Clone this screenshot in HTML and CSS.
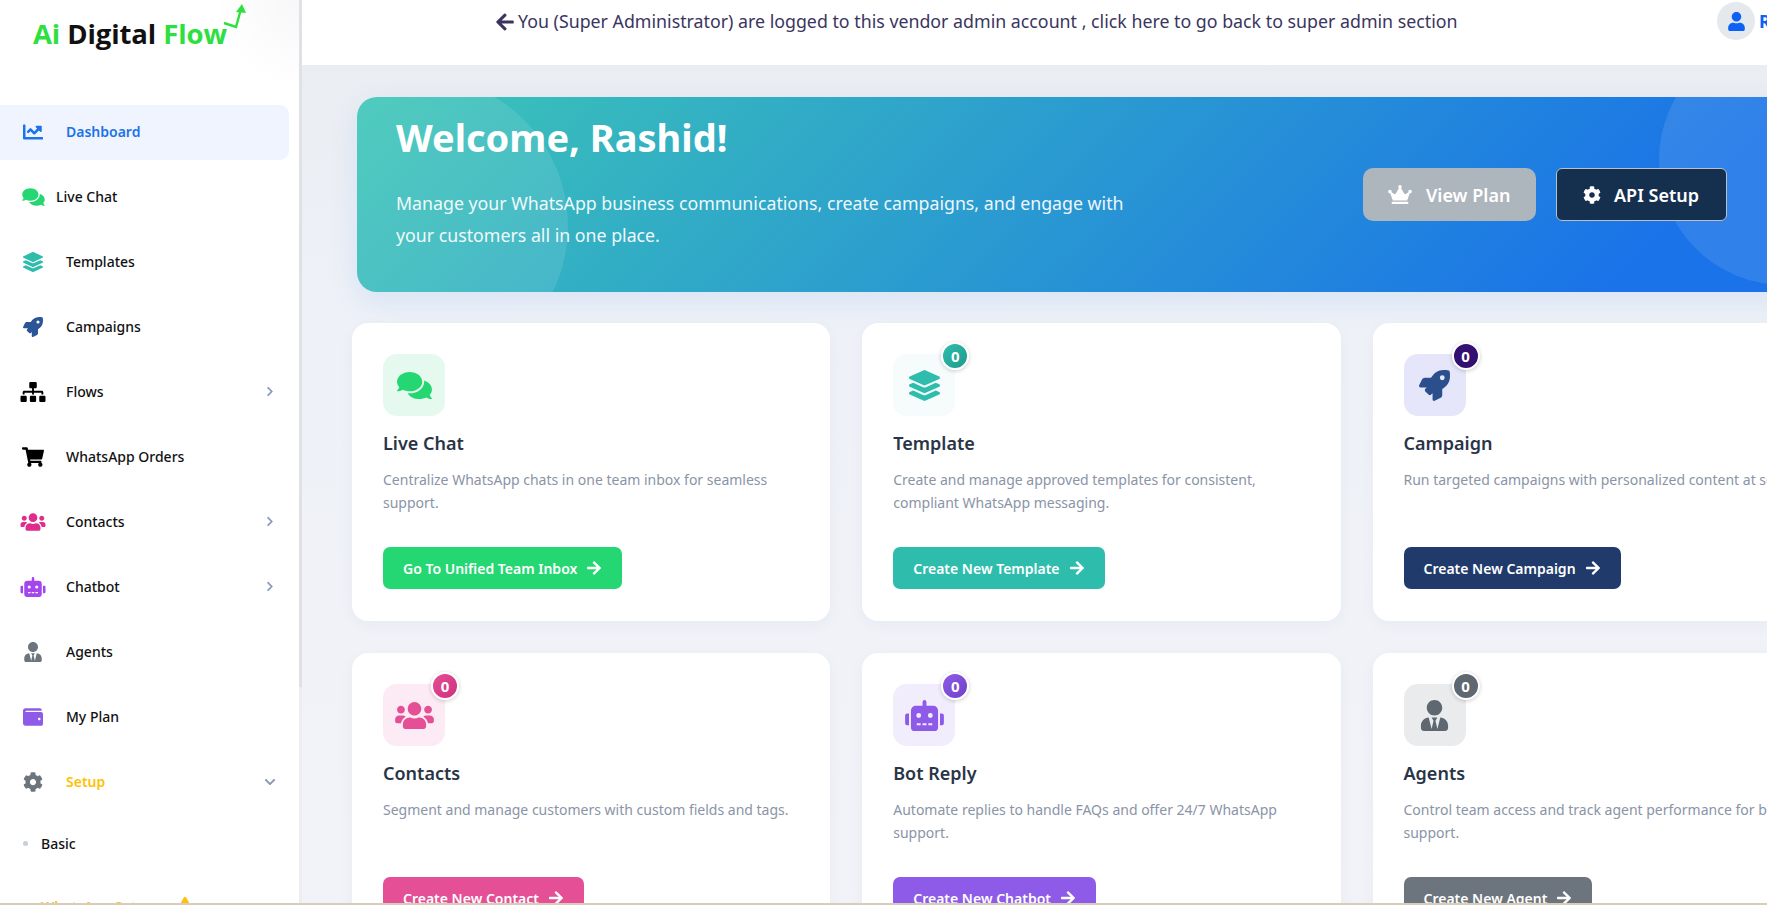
FILE: index.html
```html
<!DOCTYPE html>
<html>
  <head>
    <title>Ai Digital Flow - Dashboard</title>
    <meta charset="UTF-8">
    <meta name="viewport" content="width=device-width, initial-scale=1.0">
    <link rel="stylesheet" href="styles.css">
  </head>
  <body>
    <!--icon sprite-->
    <svg class="sprite" xmlns="http://www.w3.org/2000/svg">
      <symbol id="i-arrow-right" viewBox="0 0 448 512"><path d="M190.5 66.9l22.2-22.2c9.4-9.4 24.6-9.4 33.9 0L441 239c9.4 9.4 9.4 24.6 0 33.9L246.6 467.3c-9.4 9.4-24.6 9.4-33.9 0l-22.2-22.2c-9.5-9.5-9.3-25 .4-34.3L311.4 296H24c-13.3 0-24-10.7-24-24v-32c0-13.3 10.7-24 24-24h287.4L190.9 101.2c-9.8-9.3-10-24.8-.4-34.3z"/></symbol>
      <symbol id="i-arrow-left" viewBox="0 0 448 512"><path d="M257.5 445.1l-22.2 22.2c-9.4 9.4-24.6 9.4-33.9 0L7 273c-9.4-9.4-9.4-24.6 0-33.9L201.4 44.7c9.4-9.4 24.6-9.4 33.9 0l22.2 22.2c9.5 9.5 9.3 25-.4 34.3L136.6 216H424c13.3 0 24 10.7 24 24v32c0 13.3-10.7 24-24 24H136.6l120.5 114.8c9.8 9.3 10 24.8.4 34.3z"/></symbol>
      <symbol id="i-chart" viewBox="0 0 512 512"><path d="M496 384H64V80c0-8.84-7.16-16-16-16H16C7.16 64 0 71.16 0 80v336c0 17.67 14.33 32 32 32h464c8.84 0 16-7.16 16-16v-32c0-8.84-7.16-16-16-16zM464 96H345.94c-21.38 0-32.09 25.85-16.97 40.97l32.4 32.4L288 242.75l-73.37-73.37c-12.5-12.5-32.76-12.5-45.25 0l-68.69 68.69c-6.25 6.25-6.25 16.38 0 22.63l22.62 22.62c6.25 6.25 16.38 6.25 22.63 0L192 237.25l73.37 73.37c12.5 12.5 32.76 12.5 45.25 0l96-96 32.4 32.4c15.12 15.12 40.97 4.41 40.97-16.97V112c.01-8.84-7.15-16-15.99-16z"/></symbol>
      <symbol id="i-comments" viewBox="0 0 576 512"><path d="M416 192c0-88.4-93.1-160-208-160S0 103.6 0 192c0 34.3 14.1 65.9 38 92-13.4 30.2-35.5 54.2-35.8 54.5-2.2 2.3-2.8 5.7-1.5 8.7S4.8 352 8 352c36.6 0 66.9-12.3 88.7-25 32.2 15.7 70.3 25 111.3 25 114.9 0 208-71.6 208-160zm122 220c23.9-26 38-57.7 38-92 0-66.9-53.5-124.2-129.3-148.1.9 6.6 1.3 13.3 1.3 20.1 0 105.9-107.7 192-240 192-10.8 0-21.3-.8-31.7-1.9C207.8 439.6 281.8 480 368 480c41 0 79.1-9.2 111.3-25 21.8 12.7 52.1 25 88.7 25 3.2 0 6.1-1.9 7.3-4.8 1.3-2.9.7-6.3-1.5-8.7-.3-.3-22.4-24.2-35.8-54.5z"/></symbol>
      <symbol id="i-layers" viewBox="0 0 512 512"><path d="M12.41 148.02l232.94 105.67c6.8 3.09 14.49 3.09 21.29 0l232.94-105.67c16.55-7.51 16.55-32.52 0-40.03L266.65 2.31a25.607 25.607 0 0 0-21.29 0L12.41 107.98c-16.55 7.51-16.55 32.53 0 40.04zm487.18 88.28l-58.09-26.33-161.64 73.27c-7.56 3.43-15.59 5.17-23.86 5.17s-16.29-1.74-23.86-5.17L70.51 209.97l-58.1 26.33c-16.55 7.5-16.55 32.5 0 40l232.94 105.59c6.8 3.08 14.49 3.08 21.29 0L499.59 276.3c16.55-7.5 16.55-32.5 0-40zm0 127.8l-57.87-26.23-161.86 73.37c-7.56 3.43-15.59 5.17-23.86 5.17s-16.29-1.74-23.86-5.17L70.29 337.87 12.41 364.1c-16.55 7.5-16.55 32.5 0 40l232.94 105.59c6.8 3.08 14.49 3.08 21.29 0L499.59 404.1c16.55-7.5 16.55-32.5 0-40z"/></symbol>
      <symbol id="i-rocket" viewBox="0 0 512 512"><path d="M505.12 19.09c-1.19-5.53-6.66-11-12.21-12.19C460.72 0 435.51 0 410.41 0 307.18 0 245.27 55.2 199.05 128H94.84c-16.35.02-35.56 11.88-42.89 26.48L2.52 253.3A28.4 28.4 0 0 0 0 264a24 24 0 0 0 24.01 24h103.81l-22.47 22.47c-11.37 11.36-13 32.26 0 45.25l50.9 50.91c11.16 11.19 32.16 13.16 45.28 0l22.47-22.47V488a24 24 0 0 0 24.01 24 28.56 28.56 0 0 0 10.71-2.52l98.73-49.39c14.63-7.3 26.51-26.5 26.51-42.86V312.8c72.6-46.31 128.03-108.41 128.03-211.09.01-25.21.01-50.41-6.95-82.62zM384.04 168a40 40 0 1 1 40.01-40 40.02 40.02 0 0 1-40.01 40z"/></symbol>
      <symbol id="i-sitemap" viewBox="0 0 640 512"><path d="M128 352H32c-17.67 0-32 14.33-32 32v96c0 17.67 14.33 32 32 32h96c17.67 0 32-14.33 32-32v-96c0-17.67-14.33-32-32-32zm-24-80h192v48h48v-48h192v48h48v-57.59c0-21.17-17.23-38.41-38.41-38.41H344v-64h40c17.67 0 32-14.33 32-32V32c0-17.67-14.33-32-32-32H256c-17.67 0-32 14.33-32 32v96c0 17.67 14.33 32 32 32h40v64H94.41C73.23 224 56 241.23 56 262.41V320h48v-48zm264 80h-96c-17.67 0-32 14.33-32 32v96c0 17.67 14.33 32 32 32h96c17.67 0 32-14.33 32-32v-96c0-17.67-14.33-32-32-32zm240 0h-96c-17.67 0-32 14.33-32 32v96c0 17.67 14.33 32 32 32h96c17.67 0 32-14.33 32-32v-96c0-17.67-14.33-32-32-32z"/></symbol>
      <symbol id="i-cart" viewBox="0 0 576 512"><path d="M528.12 301.319l47.273-208C578.806 78.301 567.391 64 551.99 64H159.208l-9.166-44.81C147.758 8.021 137.93 0 126.529 0H24C10.745 0 0 10.745 0 24v16c0 13.255 10.745 24 24 24h69.883l70.248 343.435C147.325 417.1 136 435.222 136 456c0 30.928 25.072 56 56 56s56-25.072 56-56c0-15.674-6.447-29.835-16.824-40h209.647C430.447 426.165 424 440.326 424 456c0 30.928 25.072 56 56 56s56-25.072 56-56c0-22.172-12.888-41.332-31.579-50.405l5.517-24.276c3.413-15.018-8.002-29.319-23.403-29.319H218.117l-6.545-32h293.145c11.206 0 20.92-7.754 23.403-18.681z"/></symbol>
      <symbol id="i-users" viewBox="0 0 640 512"><path d="M96 224c35.3 0 64-28.7 64-64s-28.7-64-64-64-64 28.7-64 64 28.7 64 64 64zm448 0c35.3 0 64-28.7 64-64s-28.7-64-64-64-64 28.7-64 64 28.7 64 64 64zm32 32h-64c-17.6 0-33.5 7.1-45.1 18.6 40.3 22.1 68.9 62 75.1 109.4h66c17.7 0 32-14.3 32-32v-32c0-35.3-28.7-64-64-64zm-256 0c61.9 0 112-50.1 112-112S381.9 32 320 32 208 82.1 208 144s50.1 112 112 112zm76.8 32h-8.3c-20.8 10-43.9 16-68.5 16s-47.6-6-68.5-16h-8.3C179.6 288 128 339.6 128 403.2V432c0 26.5 21.5 48 48 48h288c26.5 0 48-21.5 48-48v-28.8c0-63.6-51.6-115.2-115.2-115.2zm-223.7-13.4C161.5 263.1 145.6 256 128 256H64c-35.3 0-64 28.7-64 64v32c0 17.7 14.3 32 32 32h65.9c6.3-47.4 34.9-87.3 75.2-109.4z"/></symbol>
      <symbol id="i-robot" viewBox="0 0 640 512"><path d="M32 224h32v192H32a32 32 0 0 1-32-32V256a32 32 0 0 1 32-32zm512-48v272a64.06 64.06 0 0 1-64 64H160a64.06 64.06 0 0 1-64-64V176a80 80 0 0 1 80-80h112V32a32 32 0 0 1 64 0v64h112a80 80 0 0 1 80 80zM264 256a40 40 0 1 0-40 40 40 40 0 0 0 40-40zm-8 128h-64v32h64zm96 0h-64v32h64zM456 256a40 40 0 1 0-40 40 40 40 0 0 0 40-40zm-8 128h-64v32h64zm192-128v128a32 32 0 0 1-32 32h-32V224h32a32 32 0 0 1 32 32z"/></symbol>
      <symbol id="i-agent" viewBox="0 0 448 512"><path d="M224 256c70.7 0 128-57.3 128-128S294.7 0 224 0 96 57.3 96 128s57.3 128 128 128zm95.8 32.6L272 480l-32-136 32-56h-96l32 56-32 136-47.8-191.4C56.9 292 0 350.3 0 422.4V464c0 26.5 21.5 48 48 48h352c26.5 0 48-21.5 48-48v-41.6c0-72.1-56.9-130.4-128.2-133.8z"/></symbol>
      <symbol id="i-wallet" viewBox="0 0 512 512"><path d="M461.2 128H80c-8.84 0-16-7.16-16-16s7.16-16 16-16h384c8.84 0 16-7.16 16-16 0-26.51-21.49-48-48-48H64C28.65 32 0 60.65 0 96v320c0 35.35 28.65 64 64 64h397.2c28.02 0 50.8-21.53 50.8-48V176c0-26.47-22.78-48-50.8-48zM416 336c-17.67 0-32-14.33-32-32s14.33-32 32-32 32 14.33 32 32-14.33 32-32 32z"/></symbol>
      <symbol id="i-cog" viewBox="0 0 512 512"><path d="M487.4 315.7l-42.6-24.6c4.3-23.2 4.3-47 0-70.2l42.6-24.6c4.9-2.8 7.1-8.6 5.5-14-11.1-35.6-30-67.8-54.7-94.6-3.8-4.1-10-5.1-14.8-2.3L380.8 110c-17.9-15.4-38.5-27.3-60.8-35.1V25.8c0-5.6-3.9-10.5-9.4-11.7-36.7-8.2-74.3-7.8-109.2 0-5.5 1.2-9.4 6.1-9.4 11.7V75c-22.2 7.9-42.8 19.8-60.8 35.1L88.7 85.5c-4.9-2.8-11-1.9-14.8 2.3-24.7 26.7-43.6 58.9-54.7 94.6-1.7 5.4.6 11.2 5.5 14L67.3 221c-4.3 23.2-4.3 47 0 70.2l-42.6 24.6c-4.9 2.8-7.1 8.6-5.5 14 11.1 35.6 30 67.8 54.7 94.6 3.8 4.1 10 5.1 14.8 2.3l42.6-24.6c17.9 15.4 38.5 27.3 60.8 35.1v49.2c0 5.6 3.9 10.5 9.4 11.7 36.7 8.2 74.3 7.8 109.2 0 5.5-1.2 9.4-6.1 9.4-11.7v-49.2c22.2-7.9 42.8-19.8 60.8-35.1l42.6 24.6c4.9 2.8 11 1.9 14.8-2.3 24.7-26.7 43.6-58.9 54.7-94.6 1.5-5.5-.7-11.3-5.6-14.1zM256 336c-44.1 0-80-35.9-80-80s35.9-80 80-80 80 35.9 80 80-35.9 80-80 80z"/></symbol>
      <symbol id="i-crown" viewBox="0 0 640 512"><path d="M528 448H112c-8.8 0-16 7.2-16 16v32c0 8.8 7.2 16 16 16h416c8.8 0 16-7.2 16-16v-32c0-8.8-7.2-16-16-16zm64-320c-26.5 0-48 21.5-48 48 0 7.1 1.6 13.7 4.4 19.8L476 239.2c-15.4 9.2-35.3 4-44.2-11.6L350.3 85C361 76.2 368 63 368 48c0-26.5-21.5-48-48-48s-48 21.5-48 48c0 15 7 28.2 17.7 37l-81.5 142.6c-8.9 15.6-28.9 20.8-44.2 11.6l-72.3-43.4c2.7-6 4.4-12.7 4.4-19.8 0-26.5-21.5-48-48-48S0 149.5 0 176s21.5 48 48 48c2.6 0 5.2-.4 7.7-.8L128 416h384l72.3-192.8c2.5.4 5.1.8 7.7.8 26.5 0 48-21.5 48-48s-21.5-48-48-48z"/></symbol>
      <symbol id="i-user" viewBox="0 0 448 512"><path d="M224 256c70.7 0 128-57.3 128-128S294.7 0 224 0 96 57.3 96 128s57.3 128 128 128zm89.6 32h-16.7c-22.2 10.2-46.9 16-72.9 16s-50.6-5.8-72.9-16h-16.7C60.2 288 0 348.2 0 422.4V464c0 26.5 21.5 48 48 48h352c26.5 0 48-21.5 48-48v-41.6c0-74.2-60.2-134.4-134.4-134.4z"/></symbol>
      <symbol id="i-chev-right" viewBox="0 0 320 512"><path d="M285.476 272.971L91.132 467.314c-9.373 9.373-24.569 9.373-33.941 0l-22.667-22.667c-9.357-9.357-9.375-24.522-.04-33.901L188.505 256 34.484 101.255c-9.335-9.379-9.317-24.544.04-33.901l22.667-22.667c9.373-9.373 24.569-9.373 33.941 0L285.475 239.03c9.373 9.372 9.373 24.568.001 33.941z"/></symbol>
      <symbol id="i-chev-down" viewBox="0 0 448 512"><path d="M207.029 381.476L12.686 187.132c-9.373-9.373-9.373-24.569 0-33.941l22.667-22.667c9.357-9.357 24.522-9.375 33.901-.04L224 284.505l154.745-154.021c9.379-9.335 24.544-9.317 33.901.04l22.667 22.667c9.373 9.373 9.373 24.569 0 33.941L240.971 381.476c-9.373 9.372-24.569 9.372-33.942 0z"/></symbol>
      <symbol id="i-warning" viewBox="0 0 576 512"><path d="M569.517 440.013C587.975 472.007 564.806 512 527.94 512H48.054c-36.937 0-59.999-40.055-41.577-71.987L246.423 24c18.467-32.009 64.72-31.951 83.154 0l239.94 416.013z"/></symbol>
    </svg>

    <div class="layout">
      <aside class="sidebar">
        <div class="logo">
          <span class="logo-text"><span class="green">Ai</span> Digital <span class="green">Flow</span></span>
          <svg class="logo-arrow" viewBox="0 0 30 30"><path d="M1 20 L13 24 L18 6" fill="none" stroke="#2ee03f" stroke-width="2.4"/><path d="M13 9 L19 1 L23 10 Z" fill="#2ee03f"/></svg>
        </div>

        <nav class="menu">
          <a class="item active"><svg class="ico c-blue"><use href="#i-chart"/></svg>Dashboard</a>
          <a class="item chat"><svg class="ico c-green"><use href="#i-comments"/></svg>Live Chat</a>
          <a class="item"><svg class="ico c-teal"><use href="#i-layers"/></svg>Templates</a>
          <a class="item"><svg class="ico c-navy"><use href="#i-rocket"/></svg>Campaigns</a>
          <a class="item"><svg class="ico wide c-black"><use href="#i-sitemap"/></svg>Flows<svg class="chev"><use href="#i-chev-right"/></svg></a>
          <a class="item"><svg class="ico cart c-black"><use href="#i-cart"/></svg>WhatsApp Orders</a>
          <a class="item"><svg class="ico wide c-pink"><use href="#i-users"/></svg>Contacts<svg class="chev"><use href="#i-chev-right"/></svg></a>
          <a class="item"><svg class="ico wide c-purple"><use href="#i-robot"/></svg>Chatbot<svg class="chev"><use href="#i-chev-right"/></svg></a>
          <a class="item"><svg class="ico c-grey"><use href="#i-agent"/></svg>Agents</a>
          <a class="item"><svg class="ico c-violet"><use href="#i-wallet"/></svg>My Plan</a>
          <a class="item setup"><svg class="ico c-grey"><use href="#i-cog"/></svg>Setup<svg class="chev down"><use href="#i-chev-down"/></svg></a>
          <a class="subitem"><span class="dot"></span>Basic</a>
          <a class="subitem warn">WhatsApp Setup<svg class="warn-ico"><use href="#i-warning"/></svg></a>
        </nav>
      </aside>

      <div class="main">
        <header class="topbar">
          <a class="notice"><svg class="notice-arrow"><use href="#i-arrow-left"/></svg>You (Super Administrator) are logged to this vendor admin account , click here to go back to super admin section</a>
          <div class="profile">
            <span class="avatar"><svg><use href="#i-user"/></svg></span>
            <span class="name">Rashid</span>
          </div>
        </header>

        <div class="content">
          <section class="banner">
            <div class="banner-text">
              <h1>Welcome, Rashid!</h1>
              <p>Manage your WhatsApp business communications, create campaigns, and engage with your customers all in one place.</p>
            </div>
            <div class="banner-btns">
              <a class="btn-plan"><svg class="crown"><use href="#i-crown"/></svg>View Plan</a>
              <a class="btn-api"><svg class="gear"><use href="#i-cog"/></svg>API Setup</a>
            </div>
          </section>

          <section class="cards">
            <div class="card green">
              <div class="card-icon"><svg><use href="#i-comments"/></svg></div>
              <h3>Live Chat</h3>
              <p>Centralize WhatsApp chats in one team inbox for seamless support.</p>
              <a class="card-btn">Go To Unified Team Inbox<svg><use href="#i-arrow-right"/></svg></a>
            </div>
            <div class="card teal">
              <div class="card-icon"><svg><use href="#i-layers"/></svg><span class="badge">0</span></div>
              <h3>Template</h3>
              <p>Create and manage approved templates for consistent, compliant WhatsApp messaging.</p>
              <a class="card-btn">Create New Template<svg><use href="#i-arrow-right"/></svg></a>
            </div>
            <div class="card navy">
              <div class="card-icon"><svg><use href="#i-rocket"/></svg><span class="badge">0</span></div>
              <h3>Campaign</h3>
              <p>Run targeted campaigns with personalized content at scale.</p>
              <a class="card-btn">Create New Campaign<svg><use href="#i-arrow-right"/></svg></a>
            </div>
            <div class="card pink">
              <div class="card-icon"><svg><use href="#i-users"/></svg><span class="badge">0</span></div>
              <h3>Contacts</h3>
              <p>Segment and manage customers with custom fields and tags.</p>
              <a class="card-btn">Create New Contact<svg><use href="#i-arrow-right"/></svg></a>
            </div>
            <div class="card purple">
              <div class="card-icon"><svg><use href="#i-robot"/></svg><span class="badge">0</span></div>
              <h3>Bot Reply</h3>
              <p>Automate replies to handle FAQs and offer 24/7 WhatsApp support.</p>
              <a class="card-btn">Create New Chatbot<svg><use href="#i-arrow-right"/></svg></a>
            </div>
            <div class="card grey">
              <div class="card-icon"><svg><use href="#i-agent"/></svg><span class="badge">0</span></div>
              <h3>Agents</h3>
              <p>Control team access and track agent performance for better support.</p>
              <a class="card-btn">Create New Agent<svg><use href="#i-arrow-right"/></svg></a>
            </div>
          </section>
        </div>
      </div>
    </div>
    <div class="window-edge"></div>
  </body>
</html>
```

FILE: styles.css
```css
* {
  box-sizing: border-box;
}
html, body {
  height: 100%;
  margin: 0;
  overflow: hidden;
}
body {
  font-family: "Noto Sans", Roboto, Arial, sans-serif;
  font-size: 14px;
  color: #212529;
  background: #eef0f6;
}
a {
  text-decoration: none;
  cursor: pointer;
}
h1, h3, p {
  margin: 0;
}
.sprite {
  display: none;
}
.layout {
  display: flex;
  height: 905px;
}

/* Sidebar */
.sidebar {
  flex: 0 0 302px;
  height: 100%;
  background:
    linear-gradient(#dfe1e5, #dfe1e5) right top / 3px 687px no-repeat,
    linear-gradient(#eceef1, #eceef1) right top / 3px 100% no-repeat,
    radial-gradient(circle at 100% 0, rgba(0, 0, 0, .03), transparent 90px),
    #fff;
  overflow: hidden;
}
.logo {
  display: flex;
  height: 105px;
  padding: 16px 0 0 33px;
}
.logo-text {
  font-family: "Open Sans", sans-serif;
  font-size: 27.5px;
  font-weight: 700;
  line-height: 36px;
  height: 36px;
  color: #111;
  letter-spacing: -.1px;
}
.logo-text .green {
  color: #2ee03f;
}
.logo-arrow {
  width: 30px;
  height: 30px;
  margin: -13px 0 0 -4px;
}
.item {
  display: flex;
  align-items: center;
  height: 55px;
  margin-bottom: 10px;
  margin-right: 13px;
  padding: 0 13px 2px 23px;
  color: #111;
  font-weight: 500;
}
.item.active {
  background: #f0f4fe;
  border-radius: 0 9px 9px 0;
  color: #1a73e8;
  font-weight: 600;
}
.item.setup {
  color: #ffc107;
  font-weight: 600;
}
.ico {
  flex: none;
  width: 20px;
  height: 20px;
  margin-right: 23px;
  fill: currentColor;
}
.ico.wide {
  width: 26px;
  margin-left: -3px;
  margin-right: 20px;
}
.ico.cart {
  width: 22px;
  margin-left: -1px;
  margin-right: 22px;
}
.item.chat .ico {
  width: 23px;
  margin-left: -1px;
  margin-right: 11px;
}
.c-blue { color: #1a73e8; }
.c-green { color: #25d772; }
.c-teal { color: #2ebdad; }
.c-navy { color: #2b5597; }
.c-black { color: #000; }
.c-pink { color: #e02c8a; }
.c-purple { color: #a445ed; }
.c-grey { color: #6c757d; }
.c-violet { color: #8e5be8; }
.chev {
  width: 8px;
  height: 11px;
  margin-left: auto;
  margin-right: 2px;
  fill: #8a9ab5;
}
.chev.down {
  width: 12px;
  height: 12px;
  margin-right: 0;
}
.subitem {
  display: flex;
  align-items: center;
  height: 20px;
  margin: 23px 0 43px 23px;
  color: #111;
  font-weight: 500;
}
.dot {
  width: 5px;
  height: 5px;
  margin-right: 13px;
  border-radius: 50%;
  background: #c8d0da;
}
.subitem.warn {
  margin-left: 41px;
  color: #ffc107;
  font-weight: 600;
}
.warn-ico {
  width: 14px;
  height: 14px;
  margin: -6px 0 0 24px;
  fill: #ffc107;
}

/* Top bar */
.main {
  flex: 1;
  min-width: 0;
  overflow: hidden;
}
.topbar {
  display: flex;
  height: 65px;
  background: #fff;
  position: relative;
}
.notice {
  display: flex;
  align-items: flex-start;
  margin-left: 195px;
  padding-top: 9px;
  color: #3a3560;
  font-size: 17.8px;
  line-height: 24px;
  white-space: nowrap;
}
.notice-arrow {
  width: 18px;
  height: 20px;
  margin: 3px 4px 0 -1px;
  fill: currentColor;
}
.profile {
  position: absolute;
  left: 1415px;
  top: 2px;
  display: flex;
  align-items: center;
  gap: 4px;
}
.avatar {
  display: flex;
  align-items: center;
  justify-content: center;
  width: 38px;
  height: 38px;
  border-radius: 50%;
  background: #e5e9ee;
}
.avatar svg {
  width: 17px;
  height: 19px;
  fill: #0d62f5;
}
.name {
  color: #0d62f5;
  font-size: 18px;
  font-weight: 700;
}

/* Content */
.content {
  height: 840px;
  padding: 32px 0 0 50px;
  background: linear-gradient(180deg, #eaedf2 0, #eef1f7 250px, #f1f3f8 100%);
}
.banner {
  position: relative;
  display: flex;
  justify-content: space-between;
  width: 1500px;
  height: 195px;
  margin-left: 5px;
  padding: 0 0 0 39px;
  border-radius: 20px;
  background: linear-gradient(135deg, #3cc6b6 0, #1a73e8 85%);
  box-shadow: 0 10px 30px rgba(26, 115, 232, .1);
  overflow: hidden;
  color: #fff;
}
.banner::before, .banner::after {
  content: "";
  position: absolute;
  border-radius: 50%;
  background: rgba(255, 255, 255, .1);
}
.banner::before {
  left: -89px;
  top: -21px;
  width: 300px;
  height: 300px;
}
.banner::after {
  left: 1302px;
  top: -62px;
  width: 250px;
  height: 250px;
}
.banner-text {
  position: relative;
  width: 740px;
  z-index: 1;
}
.banner h1 {
  margin-top: 16px;
  font-size: 38px;
  font-weight: 700;
  line-height: 48px;
}
.banner p {
  margin-top: 26px;
  font-size: 17.75px;
  line-height: 32px;
  opacity: .92;
}
.banner-btns {
  position: absolute;
  left: 1006px;
  top: 71px;
  display: flex;
  gap: 20px;
  z-index: 1;
}
.btn-plan, .btn-api {
  display: flex;
  align-items: center;
  height: 53px;
  color: #fff;
  font-size: 18px;
  font-weight: 600;
}
.btn-plan {
  width: 173px;
  padding-left: 25px;
  border-radius: 10px;
  background: #adb5bd;
}
.btn-api {
  width: 171px;
  padding-left: 26px;
  border: 1px solid #b8c0c8;
  border-radius: 6px;
  background: #15304f;
}
.crown {
  width: 24px;
  height: 19px;
  margin-right: 14px;
  fill: #fff;
}
.gear {
  width: 18px;
  height: 18px;
  margin-right: 13px;
  fill: #fff;
}

/* Cards */
.cards {
  display: grid;
  grid-template-columns: repeat(3, 478.25px);
  gap: 32px;
  margin-top: 31px;
}
.card {
  position: relative;
  height: 298px;
  padding: 31px;
  background: #fff;
  border-radius: 16px;
  box-shadow: 0 4px 16px rgba(40, 60, 110, .04);
}
.card-icon {
  position: relative;
  display: flex;
  align-items: center;
  justify-content: center;
  width: 62px;
  height: 62px;
  border-radius: 14px;
}
.card-icon svg {
  width: 39px;
  height: 31px;
  fill: currentColor;
}
.badge {
  position: absolute;
  top: -12px;
  right: -14px;
  display: flex;
  align-items: center;
  justify-content: center;
  width: 28px;
  height: 28px;
  border: 2px solid #fff;
  border-radius: 50%;
  color: #fff;
  font-size: 15px;
  font-weight: 700;
  box-shadow: 0 1px 4px rgba(0, 0, 0, .2);
}
.card h3 {
  margin-top: 14px;
  color: #2a3447;
  font-size: 18px;
  font-weight: 600;
  line-height: 26px;
}
.card p {
  height: 46px;
  margin-top: 12px;
  color: #8a94a6;
  font-size: 14px;
  line-height: 23px;
}
.card-btn {
  display: inline-flex;
  align-items: center;
  height: 42px;
  margin-top: 33px;
  padding: 0 20px;
  border-radius: 7px;
  color: #fff;
  font-size: 14px;
  font-weight: 600;
  white-space: nowrap;
}
.card-btn svg {
  width: 16px;
  height: 16px;
  margin-left: 9px;
  fill: #fff;
}
.card.green .card-icon { background: #e6f9ef; color: #25d772; }
.card.green .card-btn { background: #25d772; }
.card.teal .card-icon { background: #f5fcfb; color: #2ebdad; }
.card.teal .card-btn { background: #2ebdad; }
.card.teal .badge { background: linear-gradient(135deg, #2ebdad, #209a8c); }
.card.navy .card-icon { background: #e6e6fb; color: #2b4f8c; }
.card.navy .card-btn { background: #1f3a6b; }
.card.navy .badge { background: #320f70; }
.card.pink .card-icon { background: #fcebf4; color: #e44f95; }
.card.pink .card-btn { background: #e44f95; }
.card.pink .badge { background: linear-gradient(135deg, #e44f95, #d02f7f); }
.card.purple .card-icon { background: #f2edfd; color: #8e5be8; }
.card.purple .card-btn { background: #8e5be8; }
.card.purple .badge { background: linear-gradient(135deg, #8e5be8, #7040c8); }
.card.grey .card-icon { background: #e9ebed; color: #5f6771; }
.card.grey .card-btn { background: #6c757d; }
.card.grey .badge { background: #5f6771; }

/* thin edge of the browser window, over the page bottom */
.window-edge {
  position: fixed;
  left: 0;
  right: 0;
  bottom: 0;
  height: 2px;
  background: #d8cdbb;
}
```
